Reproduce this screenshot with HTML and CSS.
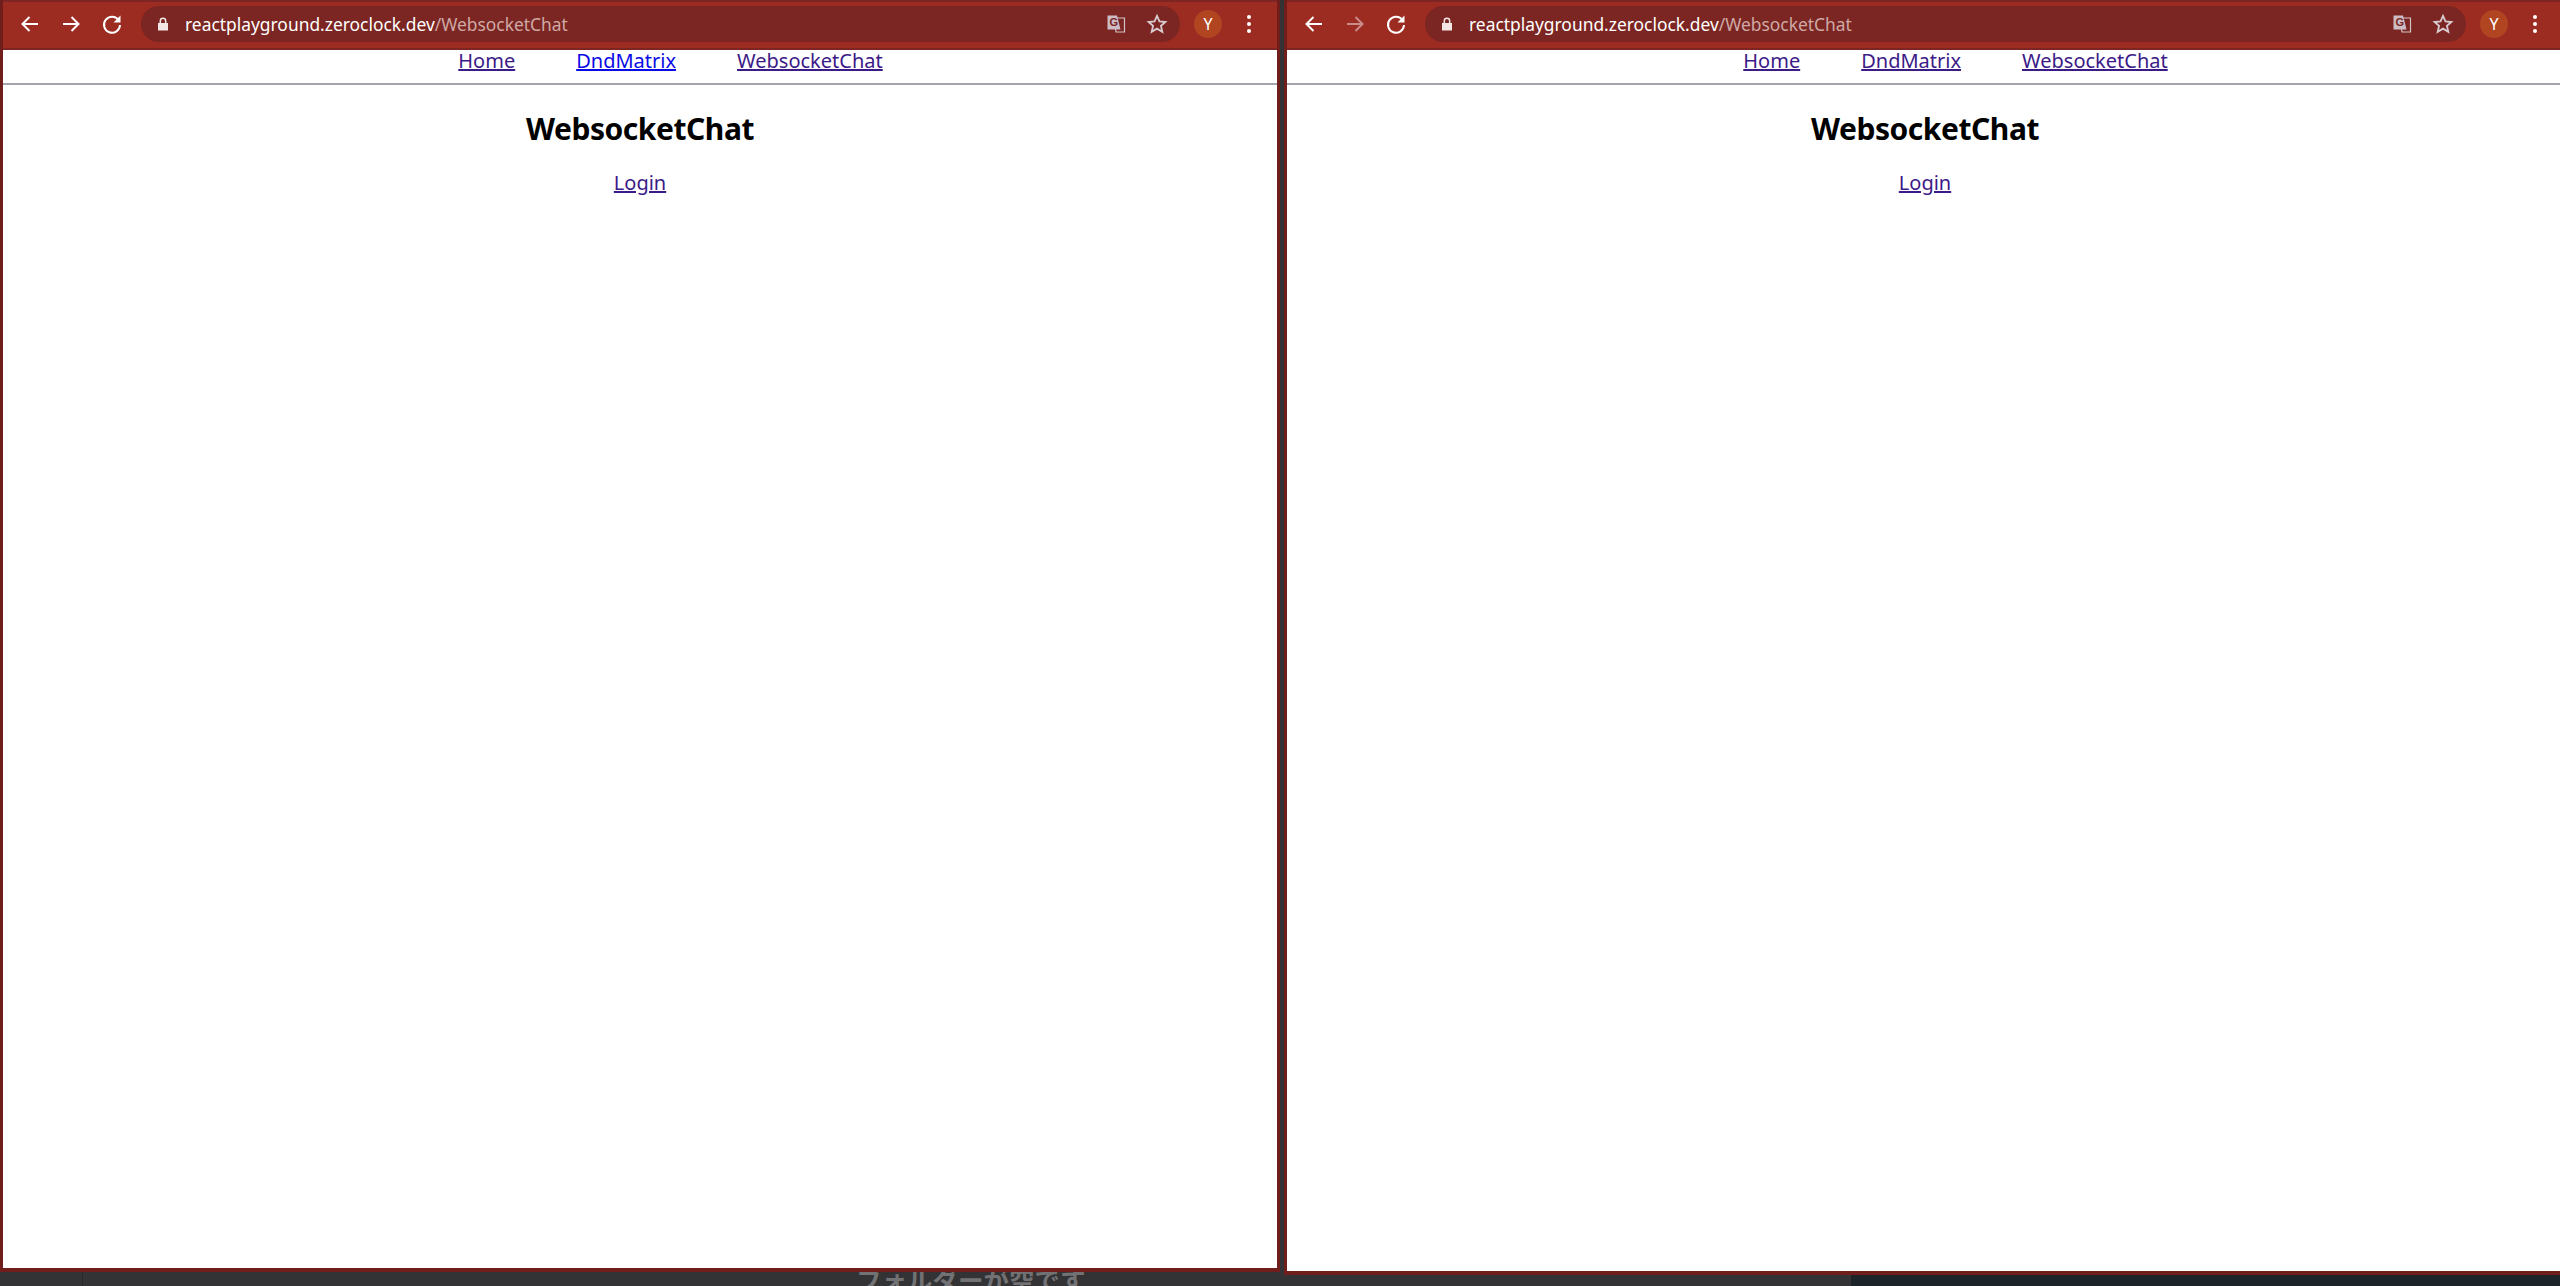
FILE: index.html
```html
<!DOCTYPE html>
<html lang="en">
<head>
<meta charset="utf-8">
<title>WebsocketChat</title>
<link rel="stylesheet" href="styles.css">
</head>
<body>
<div class="desktop">
  <div class="side-edge"></div>
  <div class="dock-dark"></div>
  <div class="behind-text">フォルダーが空です</div>

  <section class="window window-left">
    <header class="toolbar">
      <svg class="nav-icon" viewBox="0 0 24 24"><path d="M20 12H5M11.5 5 4.5 12l7 7" /></svg>
      <svg class="nav-icon" viewBox="0 0 24 24"><path d="M4 12h15M12.5 5l7 7-7 7" /></svg>
      <svg class="nav-icon" viewBox="0 0 24 24"><path d="M18.6 8.2A8 8 0 1 0 20 13" /><path class="fill" d="M20.5 3.500v7h-7z" /></svg>
      <div class="omnibox">
        <svg class="lock" viewBox="0 0 12 14"><path class="lock-body" d="M1 6h10v7.500H1z" /><path class="lock-arc" d="M3.300 6V4a2.700 2.700 0 0 1 5.400 0v2" /></svg>
        <span class="url">reactplayground.zeroclock.dev<span class="url-path">/WebsocketChat</span></span>
        <svg class="translate" viewBox="0 0 20 20"><path class="tr-back" d="M8 4h10.500v14H10z" /><path class="tr-front" d="M1.500 1.500H11l3.500 14h-13z" /><text class="tr-g" x="3.500" y="12">G</text></svg>
        <svg class="star" viewBox="0 0 24 24"><path d="m12 3.200 2.700 6 6.500.6-4.900 4.300 1.500 6.400L12 17.100l-5.800 3.400 1.500-6.400-4.900-4.300 6.500-.6z" /></svg>
      </div>
      <div class="avatar">Y</div>
      <div class="kebab"><i></i><i></i><i></i></div>
    </header>
    <nav class="sitenav">
      <a class="visited" href="#home">Home</a>
      <a class="fresh" href="#dnd">DndMatrix</a>
      <a class="visited" href="#chat">WebsocketChat</a>
    </nav>
    <main class="content">
      <h1>WebsocketChat</h1>
      <a class="visited" href="#login">Login</a>
    </main>
  </section>

  <section class="window window-right">
    <header class="toolbar">
      <svg class="nav-icon" viewBox="0 0 24 24"><path d="M20 12H5M11.5 5 4.5 12l7 7" /></svg>
      <svg class="nav-icon dim" viewBox="0 0 24 24"><path d="M4 12h15M12.5 5l7 7-7 7" /></svg>
      <svg class="nav-icon" viewBox="0 0 24 24"><path d="M18.6 8.2A8 8 0 1 0 20 13" /><path class="fill" d="M20.5 3.500v7h-7z" /></svg>
      <div class="omnibox">
        <svg class="lock" viewBox="0 0 12 14"><path class="lock-body" d="M1 6h10v7.500H1z" /><path class="lock-arc" d="M3.300 6V4a2.700 2.700 0 0 1 5.400 0v2" /></svg>
        <span class="url">reactplayground.zeroclock.dev<span class="url-path">/WebsocketChat</span></span>
        <svg class="translate" viewBox="0 0 20 20"><path class="tr-back" d="M8 4h10.500v14H10z" /><path class="tr-front" d="M1.500 1.500H11l3.500 14h-13z" /><text class="tr-g" x="3.500" y="12">G</text></svg>
        <svg class="star" viewBox="0 0 24 24"><path d="m12 3.200 2.700 6 6.500.6-4.900 4.300 1.500 6.400L12 17.100l-5.800 3.400 1.500-6.400-4.900-4.300 6.500-.6z" /></svg>
      </div>
      <div class="avatar">Y</div>
      <div class="kebab"><i></i><i></i><i></i></div>
    </header>
    <nav class="sitenav">
      <a class="visited" href="#home">Home</a>
      <a class="visited" href="#dnd">DndMatrix</a>
      <a class="visited" href="#chat">WebsocketChat</a>
    </nav>
    <main class="content">
      <h1>WebsocketChat</h1>
      <a class="visited" href="#login">Login</a>
    </main>
  </section>
</div>
</body>
</html>
```

FILE: styles.css
```css
* { box-sizing: border-box; }
html, body { margin: 0; height: 100%; overflow: hidden; }
body { font-family: "Noto Sans", "Open Sans", sans-serif; }

.desktop {
  position: relative;
  width: 2560px;
  height: 1286px;
  background: #333335;
  overflow: hidden;
}
.side-edge {
  position: absolute;
  left: 82px;
  top: 1272px;
  bottom: 0;
  width: 1px;
  background: #29292b;
}
.dock-dark {
  position: absolute;
  left: 1851px;
  right: 0;
  top: 1274px;
  bottom: 0;
  background: #1c2329;
}
.behind-text {
  position: absolute;
  left: 856px;
  top: 1261px;
  font: 700 25.5px/36px "Noto Sans CJK JP", sans-serif;
  color: #727274;
  white-space: nowrap;
}

.window {
  position: absolute;
  top: 0;
  display: flex;
  flex-direction: column;
  background: #fff;
  border: 3px solid #6f1e1c;
  border-top: 0;
  border-bottom-width: 4px;
}
.window-left { left: 0; width: 1280px; height: 1272px; }
.window-right { left: 1284px; width: 1279px; height: 1275px; border-right: 0; }

.toolbar {
  flex: none;
  height: 50px;
  display: flex;
  align-items: center;
  padding: 0 0 0 15px;
  background: #9c2b22;
  box-shadow: inset 0 2px 0 #7d2522;
  border-bottom: 2px solid #7b2622;
}
.nav-icon {
  flex: none;
  width: 24px;
  height: 24px;
  margin-right: 17px;
  fill: none;
  stroke: #fff;
  stroke-width: 2;
}
.nav-icon.dim { opacity: .45; }
.nav-icon .fill { fill: #fff; stroke: none; }

.omnibox {
  flex: none;
  width: 1039px;
  height: 36px;
  display: flex;
  align-items: center;
  padding-left: 16px;
  border-radius: 18px;
  background: #7b2622;
}
.window-right .omnibox { width: 1041px; }
.lock { width: 12px; height: 14px; flex: none; }
.lock-body { fill: #f3e6e4; }
.lock-arc { fill: none; stroke: #f3e6e4; stroke-width: 1.5; }
.url {
  margin-left: 16px;
  flex: 1;
  font-size: 17.4px;
  color: #fff;
  white-space: nowrap;
}
.url-path { color: #cfa9a6; }
.translate { flex: none; width: 20px; height: 20px; margin-right: 20px; }
.tr-back { fill: #7b2622; stroke: #d3c3c6; stroke-width: 1.2; }
.tr-front { fill: #cdbcc6; }
.tr-g { font: 700 11px "Liberation Sans", sans-serif; fill: #7b2622; }
.star {
  flex: none;
  width: 22px;
  height: 22px;
  margin-right: 12px;
  fill: none;
  stroke: #d8c9cf;
  stroke-width: 2;
}
.avatar {
  flex: none;
  width: 28px;
  height: 28px;
  margin-left: 14px;
  border-radius: 50%;
  background: #b14522;
  color: #fff;
  font-size: 16px;
  line-height: 28px;
  text-align: center;
}
.kebab {
  flex: none;
  margin-left: 25px;
  display: flex;
  flex-direction: column;
  gap: 3px;
}
.kebab i { width: 4px; height: 4px; border-radius: 50%; background: #fff; }

.sitenav {
  flex: none;
  height: 35px;
  display: flex;
  justify-content: center;
  gap: 61px;
  padding-left: 61px;
  border-bottom: 2px solid #a5a3ab;
  font-size: 20px;
  line-height: 21px;
}
.visited { color: #3c1a88; }
.fresh { color: #0a0ae6; }
.content {
  display: flex;
  flex-direction: column;
  align-items: center;
  font-size: 20px;
}
.content h1 {
  margin: 24px 0 20px;
  font-size: 30px;
  line-height: 40px;
  letter-spacing: -0.45px;
  font-weight: 700;
  color: #000;
}
```
